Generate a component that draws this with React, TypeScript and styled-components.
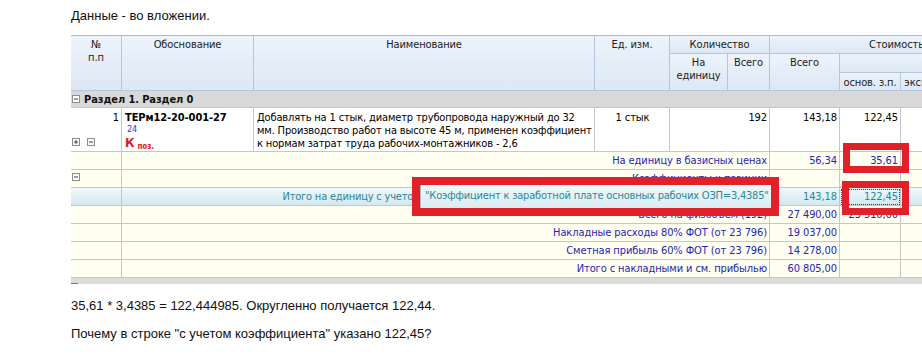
import React from "react";
import styled, { createGlobalStyle, css } from "styled-components";

const GRID_FONT = `"DejaVu Sans Condensed", "DejaVu Sans", sans-serif`;

const GlobalStyle = createGlobalStyle`
  html, body { margin: 0; padding: 0; background: #ffffff; }
  body { font-family: "Liberation Sans", Arial, sans-serif; }
`;

const Page = styled.main`
  padding: 8px 0 0 71px;
`;

const Para = styled.p<{ $top?: number; $bottom?: number }>`
  margin: ${(p) => p.$top ?? 0}px 0 ${(p) => p.$bottom ?? 0}px;
  font-size: 13px;
  line-height: 15px;
  color: #111;
`;

const GridFrame = styled.div`
  position: relative;
  width: 851px;
  overflow: hidden;
  border-top: 1px solid #a9bcd3;
`;

const Grid = styled.table`
  width: 953px;
  table-layout: fixed;
  border-collapse: separate;
  border-spacing: 0;
  font-family: ${GRID_FONT};
  font-stretch: condensed;
  font-size: 11px;
  line-height: 13px;
  letter-spacing: -0.1px;
  color: #000;
`;

const HeadRow = styled.tr<{ $h: number }>`
  height: ${(p) => p.$h}px;
`;

const HeadCell = styled.th<{ $pt?: number }>`
  padding: ${(p) => p.$pt ?? 2}px 2px 0;
  vertical-align: top;
  text-align: center;
  font-weight: normal;
  color: #1c1c1c;
  background: linear-gradient(#ecf3fb, #dde8f4);
  border-right: 1px solid #b4c6db;
  border-bottom: 1px solid #b4c6db;
  white-space: nowrap;
  overflow: hidden;
`;

const SectionRow = styled.tr`
  height: 17px;
`;

const SectionCell = styled.td`
  height: 16px;
  padding: 0;
  background: #d9d9d9;
  border-bottom: 1px solid #c4c4c4;
  font-weight: bold;
  color: #111;
  white-space: nowrap;
`;

const SectionInner = styled.div`
  display: flex;
  align-items: center;
  gap: 4px;
  height: 16px;
  padding-left: 1px;
`;

const ItemRow = styled.tr`
  height: 44px;
  background: #ffffff;
`;

const Cell = styled.td<{
  $align?: "left" | "right" | "center";
  $noRight?: boolean;
  $focus?: boolean;
  $top?: boolean;
  $tight?: boolean;
}>`
  padding: ${(p) => (p.$top ? "3px" : "0")} ${(p) => (p.$tight ? "0" : "2px")} 0 3px;
  vertical-align: ${(p) => (p.$top ? "top" : "middle")};
  text-align: ${(p) => p.$align ?? "left"};
  border-right: ${(p) => (p.$noRight ? "1px solid transparent" : "1px solid #c6c6c6")};
  border-bottom: 1px solid #c6c6c6;
  white-space: nowrap;
  overflow: hidden;
  ${(p) =>
    p.$focus &&
    css`
      outline: 1px dotted #3a3a3a;
      outline-offset: -2px;
    `}
`;

const PosStack = styled.div`
  height: 35px;
  display: flex;
  flex-direction: column;
  justify-content: space-between;
`;

const PosNum = styled.div`
  text-align: right;
`;

const Toggles = styled.div`
  display: flex;
  gap: 7px;
  margin-left: -2px;
`;

const Code = styled.div`
  font-weight: bold;
  height: 13px;
`;

const SubRef = styled.div`
  color: #3333cc;
  font-size: 9px;
  line-height: 11px;
  height: 11px;
  padding-left: 2px;
`;

const Mark = styled.div`
  color: #e01b1b;
  font-weight: bold;
  font-size: 13px;
  line-height: 15px;
  height: 15px;
`;

const MarkSub = styled.span`
  position: relative;
  top: 2px;
  font-size: 8px;
  line-height: 8px;
  margin-left: 3px;
`;

const Description = styled.div`
  white-space: nowrap;
  letter-spacing: -0.15px;
`;

const SumRow = styled.tr<{ $tone: "base" | "total" }>`
  height: 18px;
  & > td {
    height: 17px;
    background: ${(p) =>
      p.$tone === "total" ? "linear-gradient(#f1f8fb, #d2e8f0)" : "#fffff1"};
    color: ${(p) => (p.$tone === "total" ? "#2a8898" : "#2525b4")};
  }
`;

const LongLabel = styled.span`
  letter-spacing: -0.2px;
`;

const ToggleHolder = styled.div`
  display: flex;
  align-items: center;
  margin-left: -2px;
  margin-top: -3px;
`;

const Strip = styled.div`
  position: relative;
  height: 6px;
  background: #dcdcdc;
  &::before {
    content: "";
    position: absolute;
    left: 0;
    bottom: 0;
    width: 7px;
    height: 1px;
    background: #777;
  }
`;

const Callout = styled.div<{ $x: number; $y: number; $w: number; $h: number; $b: number }>`
  position: absolute;
  left: ${(p) => p.$x}px;
  top: ${(p) => p.$y}px;
  width: ${(p) => p.$w}px;
  height: ${(p) => p.$h}px;
  box-sizing: border-box;
  border: ${(p) => p.$b}px solid #e2202a;
  pointer-events: none;
`;

const Hint = styled.div`
  height: 100%;
  box-sizing: border-box;
  border-left: 1px solid #a9b9c2;
  background: linear-gradient(#f3f9fc, #d8ebf2);
  color: #2a8898;
  font-family: ${GRID_FONT};
  font-stretch: condensed;
  font-size: 11px;
  letter-spacing: -0.2px;
  line-height: 22px;
  padding-left: 4px;
  white-space: nowrap;
  overflow: hidden;
`;

const Toggle = ({ plus }: { plus?: boolean }) => (
  <svg width="8" height="8" viewBox="0 0 8 8" style={{ display: "block" }}>
    <rect x="0.5" y="0.5" width="7" height="7" fill="#fafafa" stroke="#8d8d8d" />
    <line x1="2" y1="4" x2="6" y2="4" stroke="#444" strokeWidth="1" />
    {plus && <line x1="4" y1="2" x2="4" y2="6" stroke="#444" strokeWidth="1" />}
  </svg>
);

const COLS = [51, 132, 341, 75, 58, 42, 70, 61, 62, 61];

type Sum = {
  label: string;
  total?: string;
  base?: string;
  tone?: "base" | "total";
  toggle?: boolean;
  focus?: boolean;
};

const SUMS: Sum[] = [
  { label: "На единицу в базисных ценах", total: "56,34", base: "35,61" },
  { label: "Коэффициенты к позиции", toggle: true },
  {
    label: 'Итого на единицу с учетом "Коэффициент к заработной плате основных рабочих ОЗП=3,4385"',
    total: "143,18",
    base: "122,45",
    tone: "total",
    focus: true,
  },
  { label: "Всего на физобъем (192)", total: "27 490,00", base: "23 510,00" },
  { label: "Накладные расходы 80% ФОТ (от 23 796)", total: "19 037,00" },
  { label: "Сметная прибыль 60% ФОТ (от 23 796)", total: "14 278,00" },
  { label: "Итого с накладными и см. прибылью", total: "60 805,00" },
];

export default function App() {
  return (
    <>
      <GlobalStyle />
      <Page>
        <Para $bottom={12}>Данные - во вложении.</Para>
        <GridFrame>
          <Grid>
            <colgroup>
              {COLS.map((w, i) => (
                <col key={i} style={{ width: w }} />
              ))}
            </colgroup>
            <thead>
              <HeadRow $h={18}>
                <HeadCell rowSpan={3}>
                  №
                  <br />
                  п.п
                </HeadCell>
                <HeadCell rowSpan={3}>Обоснование</HeadCell>
                <HeadCell rowSpan={3}>Наименование</HeadCell>
                <HeadCell rowSpan={3}>Ед. изм.</HeadCell>
                <HeadCell colSpan={2}>Количество</HeadCell>
                <HeadCell colSpan={4}>Стоимость</HeadCell>
              </HeadRow>
              <HeadRow $h={19}>
                <HeadCell rowSpan={2}>
                  На
                  <br />
                  единицу
                </HeadCell>
                <HeadCell rowSpan={2}>Всего</HeadCell>
                <HeadCell rowSpan={2}>Всего</HeadCell>
                <HeadCell colSpan={3} />
              </HeadRow>
              <HeadRow $h={18}>
                <HeadCell $pt={3}>основ. з.п.</HeadCell>
                <HeadCell $pt={3}>эксп. маш.</HeadCell>
                <HeadCell $pt={3}>в т.ч. з.п.</HeadCell>
              </HeadRow>
            </thead>
            <tbody>
              <SectionRow>
                <SectionCell colSpan={10}>
                  <SectionInner>
                    <Toggle />
                    <span>Раздел 1. Раздел 0</span>
                  </SectionInner>
                </SectionCell>
              </SectionRow>
              <ItemRow>
                <Cell $top>
                  <PosStack>
                    <PosNum>1</PosNum>
                    <Toggles>
                      <Toggle plus />
                      <Toggle />
                    </Toggles>
                  </PosStack>
                </Cell>
                <Cell $top>
                  <Code>ТЕРм12-20-001-27</Code>
                  <SubRef>24</SubRef>
                  <Mark>
                    К<MarkSub>поз.</MarkSub>
                  </Mark>
                </Cell>
                <Cell $top $tight>
                  <Description>
                    Добавлять на 1 стык, диаметр трубопровода наружный до 32
                    <br />
                    мм. Производство работ на высоте 45 м, применен коэффициент
                    <br />к нормам затрат труда рабочих-монтажников - 2,6
                  </Description>
                </Cell>
                <Cell $top $align="center">
                  1 стык
                </Cell>
                <Cell $top $noRight />
                <Cell $top $align="right">
                  192
                </Cell>
                <Cell $top $align="right">
                  143,18
                </Cell>
                <Cell $top $align="right">
                  122,45
                </Cell>
                <Cell $top />
                <Cell $top />
              </ItemRow>
              {SUMS.map((s, i) => (
                <SumRow key={i} $tone={s.tone ?? "base"}>
                  <Cell>
                    {s.toggle && (
                      <ToggleHolder>
                        <Toggle />
                      </ToggleHolder>
                    )}
                  </Cell>
                  <Cell colSpan={5} $align="right">
                    {s.tone === "total" ? <LongLabel>{s.label}</LongLabel> : s.label}
                  </Cell>
                  <Cell $align="right">{s.total}</Cell>
                  <Cell $align="right" $focus={s.focus}>
                    {s.base}
                  </Cell>
                  <Cell />
                  <Cell />
                </SumRow>
              ))}
            </tbody>
          </Grid>
          <Strip />
          <Callout $x={772} $y={107} $w={66} $h={30} $b={7} />
          <Callout $x={771} $y={145} $w={67} $h={34} $b={7} />
          <Callout $x={341} $y={141} $w={367} $h={39} $b={8}>
            <Hint>"Коэффициент к заработной плате основных рабочих ОЗП=3,4385"</Hint>
          </Callout>
        </GridFrame>
        <Para $top={14}>35,61 * 3,4385 = 122,444985. Округленно получается 122,44.</Para>
        <Para $top={13}>Почему в строке "с учетом коэффициента" указано 122,45?</Para>
      </Page>
    </>
  );
}
